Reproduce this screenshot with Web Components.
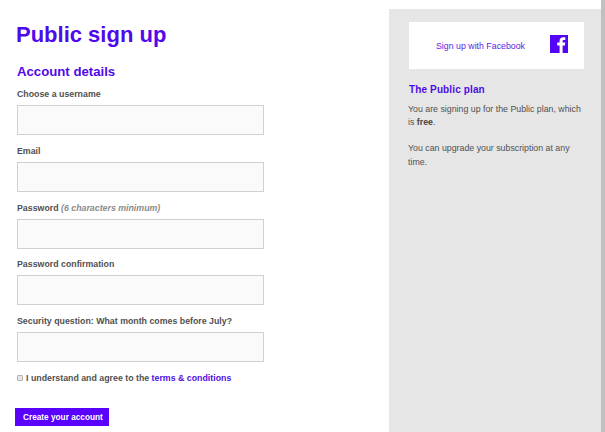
<!DOCTYPE html>
<html lang="en"><head><meta charset="utf-8"><title>Public sign up</title>
<style>html,body{margin:0;height:100%;overflow:hidden;background:#fff}</style></head>
<body><signup-page></signup-page>
<script>
const define = (name, html) => customElements.define(name, class extends HTMLElement {
  constructor() {
    super();
    const t = document.createElement('template');
    t.innerHTML = html;
    this.attachShadow({ mode: 'open' }).append(t.content.cloneNode(true));
  }
});
define('form-field', `<style>
:host{display:flex;flex-direction:column;height:56.75px;flex:none}
.l{font-weight:bold;line-height:16px;height:16px;margin-bottom:3px;white-space:nowrap;transform:rotate(.02deg) scaleY(1.09)}
.i{width:247px;height:30px;box-sizing:border-box;border:1px solid #d0d0d0;background:#fafafa}
</style><div class="l"><slot></slot></div><div class="i"></div>`);
define('agree-check', `<style>
:host{display:flex;align-items:center;height:16px;font-weight:bold;white-space:nowrap}
i{width:6px;height:6px;box-sizing:border-box;border:1px solid #b4b4b4;border-radius:1px;background:#e6e6e6;margin-right:3px}
span{transform:rotate(.02deg) scaleY(1.09)}
</style><i></i><span><slot></slot></span>`);
define('action-button', `<style>
:host{display:block;width:94px;height:18px;box-sizing:border-box;padding-left:8px;background:#5a00ff;color:#fff;font-weight:bold;font-size:8.25px;line-height:19px;white-space:nowrap}
span{display:block;transform:rotate(.02deg) scaleY(1.15)}
</style><span><slot></slot></span>`);
define('facebook-card', `<style>
:host{display:flex;align-items:center;background:#fff;height:47px;width:175px;box-sizing:border-box;margin-left:1px;padding-left:27px;color:#5a1ee0;white-space:nowrap}
span{width:114px;transform:rotate(.02deg) scaleY(1.09)}svg{display:block;margin-bottom:4px}
</style><span><slot></slot></span><svg width="18" height="18" viewBox="0 0 18 18"><path fill="#5206f5" d="M0 0H18V18H0Z"/><path fill="#fff" d="M9.6 18V10.4H7.2V7.5H9.6V5.8C9.6 3.5 11 2.2 13.2 2.2H15.3V5H13.9C13 5 12.6 5.4 12.6 6.2V7.5H15.3L14.9 10.4H12.6V18Z"/></svg>`);
define('plan-sidebar', `<style>
:host{display:block;width:216px;box-sizing:border-box;margin-top:9px;padding:13px 0 0 19px;border-right:4px solid #c0c0c0;background:#e6e6e6}
h3{margin:14px 0 0 1px;color:#4c0be6;font-size:10px;line-height:14px;letter-spacing:.13px}
p{margin:5px 0 0 .4px;white-space:nowrap}p+p{margin-top:13px}b{color:#444}
p span{display:block;height:13.2px;line-height:14px;transform:rotate(.02deg) scaleY(1.09)}
</style><facebook-card>Sign up with Facebook</facebook-card><h3>The Public plan</h3>
<p><span>You are signing up for the Public plan, which</span><span>is <b>free</b>.</span></p><p><span>You can upgrade your subscription at any</span><span>time.</span></p>`);
define('signup-page', `<style>
:host{display:flex;width:605px;height:432px;font:8.8px "Liberation Sans",Arial,sans-serif;color:#505050;overflow:hidden}
main{width:389px;box-sizing:border-box;padding:20px 0 0 17px}
h1,h2{margin:0;color:#5008ec;white-space:nowrap}
h1{font-size:22px;line-height:30px;margin-left:-1px;transform:scaleY(1.03)}
h2{font-size:13.2px;line-height:16px;margin:14px 0 6px;transform:rotate(.02deg) scaleY(1.03)}
em{color:#8c8c8c}a{color:#4f0fe0}
action-button{margin:22px 0 0 -2px}
.edge{width:4px;height:9px;background:#c0c0c0;margin-left:-4px;flex:none}
</style><main><h1>Public sign up</h1><h2>Account details</h2>
<form-field>Choose a username</form-field><form-field>Email</form-field><form-field>Password <em>(6 characters minimum)</em></form-field><form-field>Password confirmation</form-field><form-field>Security question: What month comes before July?</form-field>
<agree-check>I understand and agree to the <a>terms &amp; conditions</a></agree-check>
<action-button>Create your account</action-button></main>
<plan-sidebar></plan-sidebar><div class="edge"></div>`);
</script></body></html>
